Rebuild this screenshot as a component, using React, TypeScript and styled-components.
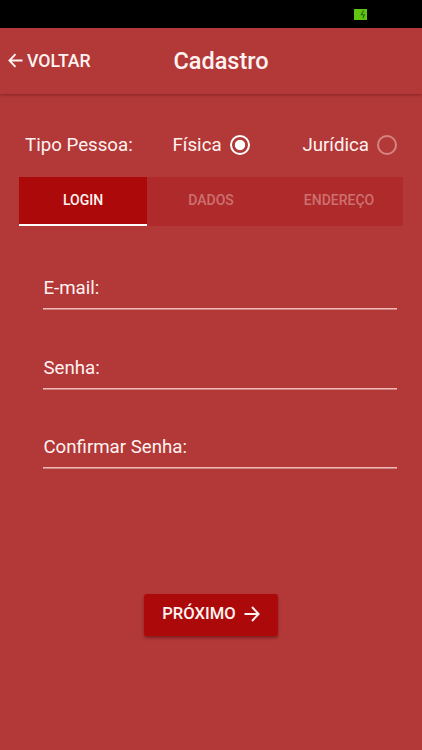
import React, { useState } from "react";
import styled, { createGlobalStyle } from "styled-components";

const GlobalStyle = createGlobalStyle`
  * { box-sizing: border-box; }
  body { margin: 0; background: #b33838; }
`;

const Screen = styled.div`
  display: flex;
  flex-direction: column;
  height: 750px;
  overflow: hidden;
  background: #b33838;
  color: #fff3f1;
  font-family: Roboto, sans-serif;
`;

const StatusBar = styled.div`
  display: flex;
  height: 28px;
  flex: none;
  padding: 9px 55px 0 0;
  justify-content: flex-end;
  background: #000;
`;

const Header = styled.header`
  display: grid;
  grid-template-columns: 1fr auto 1fr;
  align-items: center;
  height: 66px;
  flex: none;
  padding: 0 8px;
  box-shadow: 0 1px 3px rgba(70, 0, 0, 0.4);
`;

const BackButton = styled.button`
  display: flex;
  align-items: center;
  gap: 4px;
  padding: 0;
  border: 0;
  background: none;
  color: inherit;
  font: 500 17.7px/24px Roboto, sans-serif;
`;

const BackArrow = styled.svg`
  margin-bottom: 2px;
`;

const Title = styled.h1`
  margin: 0 0 0 20px;
  font-size: 23.5px;
  font-weight: 500;
  line-height: 30px;
`;

const PersonType = styled.div`
  display: flex;
  align-items: center;
  height: 24px;
  margin: 39px 25px 0;
  font-size: 18.7px;
  line-height: 24px;
`;

const Prompt = styled.span`
  width: 147.5px;
`;

const Option = styled.label<{ $end?: boolean }>`
  display: flex;
  align-items: center;
  gap: 8px;
  margin-left: ${(p) => (p.$end ? "auto" : "0")};
`;

const Radio = styled.input`
  appearance: none;
  width: 20px;
  height: 20px;
  margin: 0;
  border: 2px solid #d58582;
  border-radius: 50%;
  &:checked {
    border-color: #fff;
    background: radial-gradient(circle, #fff 4.7px, transparent 5.6px);
  }
`;

const Tabs = styled.div`
  display: grid;
  grid-template-columns: repeat(3, 1fr);
  height: 49px;
  margin: 20px 19px 0;
  background: #af2a2b;
`;

const Tab = styled.button<{ $active?: boolean }>`
  padding: 0 0 3px;
  border: 0;
  background: ${(p) => (p.$active ? "#ac0a0a" : "transparent")};
  box-shadow: ${(p) => (p.$active ? "inset 0 -2px #fff" : "none")};
  color: ${(p) => (p.$active ? "#fff3f1" : "#cd7170")};
  font: 500 14px/20px Roboto, sans-serif;
`;

const Form = styled.form`
  display: flex;
  flex-direction: column;
  flex: 1;
  margin: 48px 25px 0 43.4px;
`;

const Field = styled.label`
  display: flex;
  height: 35px;
  margin-bottom: 44.6px;
  box-shadow: 0 1px #cf8280, inset 0 -1px #f0bab7;
  font-size: 18.7px;
  line-height: 28px;
`;

const Input = styled.input`
  flex: 1;
  min-width: 0;
  border: 0;
  outline: 0;
  background: none;
  color: inherit;
  font: inherit;
`;

const NextButton = styled.button`
  display: flex;
  align-items: center;
  justify-content: center;
  gap: 8px;
  width: 134px;
  height: 42px;
  margin: 81px 0 0 100.6px;
  padding: 0 0 1px;
  border: 0;
  border-radius: 3px;
  background: #ac0a0a;
  box-shadow: 0 2px 3px rgba(70, 0, 0, 0.45);
  color: #fff3f1;
  font: 500 16.6px/24px Roboto, sans-serif;
`;

const NextArrow = styled.svg`
  margin-bottom: 1px;
`;

const BatteryIcon = () => (
  <svg width="13" height="11" viewBox="0 0 13 11">
    <path d="M0 0h13v11H0z" fill="#60c510" />
    <path d="M9.5 1.5 7.3 5.8h3L8.8 9.3" fill="none" stroke="#23670a" strokeWidth="1.1" />
  </svg>
);

const tabs = ["LOGIN", "DADOS", "ENDEREÇO"];
const fields = [
  { label: "E-mail:", type: "email" },
  { label: "Senha:", type: "password" },
  { label: "Confirmar Senha:", type: "password" },
];

export default function App() {
  const [person, setPerson] = useState("fisica");
  return (
    <Screen>
      <GlobalStyle />
      <StatusBar><BatteryIcon /></StatusBar>
      <Header>
        <BackButton>
          <BackArrow width="15" height="15" viewBox="0 0 16 16" fill="none" stroke="currentColor" strokeWidth="2">
            <path d="M15.5 8H1.8M8 1.2 1.5 8 8 14.8" />
          </BackArrow>
          VOLTAR
        </BackButton>
        <Title>Cadastro</Title>
      </Header>
      <PersonType>
        <Prompt>Tipo Pessoa:</Prompt>
        <Option>
          Física
          <Radio type="radio" name="person" checked={person === "fisica"} onChange={() => setPerson("fisica")} />
        </Option>
        <Option $end>
          Jurídica
          <Radio type="radio" name="person" checked={person === "juridica"} onChange={() => setPerson("juridica")} />
        </Option>
      </PersonType>
      <Tabs>
        {tabs.map((tab, i) => <Tab key={tab} $active={i === 0} disabled={i > 0}>{tab}</Tab>)}
      </Tabs>
      <Form>
        {fields.map((field) => (
          <Field key={field.label}>{field.label}<Input type={field.type} /></Field>
        ))}
        <NextButton type="button">
          PRÓXIMO
          <NextArrow width="16" height="16" viewBox="0 0 16 16" fill="none" stroke="currentColor" strokeWidth="2">
            <path d="M.5 8h13.9M8 1l6.6 7L8 15" />
          </NextArrow>
        </NextButton>
      </Form>
    </Screen>
  );
}
